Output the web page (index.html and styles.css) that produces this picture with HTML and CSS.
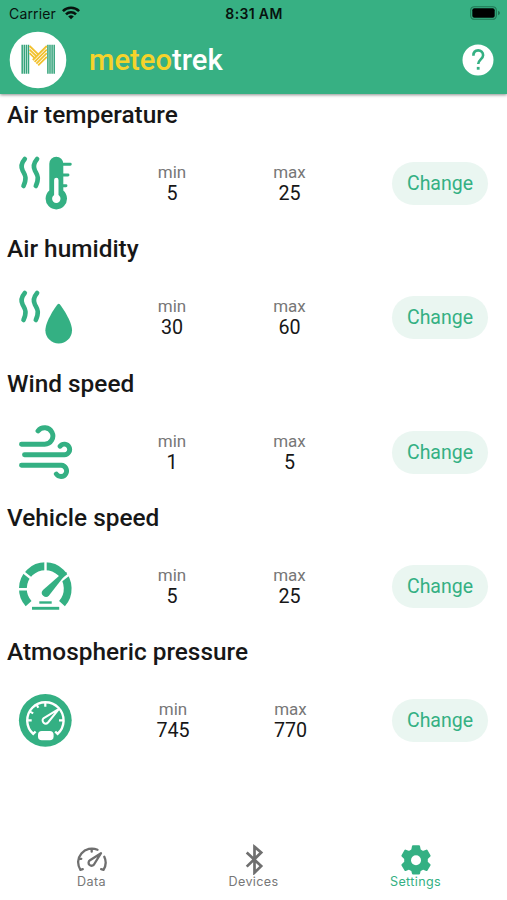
FILE: index.html
```html
<!DOCTYPE html>
<html lang="en">
<head>
<meta charset="utf-8">
<title>meteotrek</title>
<link rel="stylesheet" href="styles.css">
</head>
<body>
<header class="header">
  <div class="status">
    <div class="carrier"><span>Carrier</span>
      <svg width="18" height="14" viewBox="0 0 18 14" fill="none" stroke="#07130e" stroke-width="2.6"><path d="M.9 5.2a11.4 11.4 0 0 1 16.2 0M4 8.4a7 7 0 0 1 10 0"/><path d="M9 13.3 6.2 10.5a4 4 0 0 1 5.6 0z" fill="#07130e" stroke="none"/></svg>
    </div>
    <span class="clock">8:31 AM</span>
    <svg class="battery" width="31" height="14" viewBox="0 0 31 14"><rect x=".7" y=".7" width="25.6" height="12.6" rx="3.6" fill="none" stroke="#1f7553" stroke-width="1.1"/><rect x="2.3" y="2.3" width="22.4" height="9.4" rx="2" fill="#000"/><path d="M28 4.7q2 .8 2 2.3t-2 2.3z" fill="#1f7553"/></svg>
  </div>
  <div class="bar">
    <svg width="58" height="58" viewBox="0 0 58 58">
      <circle cx="29" cy="29" r="28.3" fill="#fff"/>
      <path d="M13.2 13.7v29M15.3 13.7v29M17.4 13.7v29M19.5 13.7v29M38.9 13.7v29M41 13.7v29M43.1 13.7v29M45.2 13.7v29" stroke="#35a47b" stroke-width="1.5"/>
      <path d="M20.6 15 30 24.2M20.6 18.6l7.6 7.4M20.6 22.2l5.8 5.6M37.8 15 23.8 29M37.8 18.6 25.6 30.8M37.8 22.2 27.4 32.6M37.8 25.8 29.2 34.4" fill="none" stroke="#f2c12e" stroke-width="1.8"/>
    </svg>
    <h1><span>meteo</span>trek</h1>
    <svg class="help" width="32" height="32" viewBox="0 0 32 32"><circle cx="16" cy="16" r="15.5" fill="#fff"/><path d="M11.4 11.7C11.4 8.4 13.4 6.4 16.2 6.4s4.9 1.9 4.9 4.8c0 3.9-4.9 4.6-4.9 8.9" fill="none" stroke="#34b083" stroke-width="2.6"/><rect x="14.8" y="22.9" width="2.8" height="2.8" fill="#34b083"/></svg>
  </div>
</header>
<main>
  <section>
    <h2>Air temperature</h2>
    <div class="row">
      <svg class="icon" viewBox="0 0 56 56"><g fill="none" stroke="#34b083" stroke-linecap="round"><path stroke-width="4.6" d="M7.8 4C4.4 8 3.6 11.5 5.6 15.5S10.5 22 6.5 31M20.1 4c-3.4 4-4.2 7.5-2.2 11.5S22.8 22 18.8 31"/><path stroke-width="2.9" d="M44 9.3h9.3M44 20h7M44 30.7h5"/></g><path d="M32.3 8.7a7 7 0 0 1 14 0v26.9a10.7 10.7 0 1 1-14 0z" fill="#34b083"/><path d="M39.3 25v18" stroke="#fff" stroke-width="4.4" stroke-linecap="round"/><circle cx="39.3" cy="43.7" r="4.2" fill="#fff"/></svg>
      <div class="value low"><span>min</span><b>5</b></div>
      <div class="value high"><span>max</span><b>25</b></div>
      <button>Change</button>
    </div>
  </section>
  <section>
    <h2>Air humidity</h2>
    <div class="row">
      <svg class="icon" viewBox="0 0 56 56"><path fill="none" stroke="#34b083" stroke-linecap="round" stroke-width="4.6" d="M7.8 4C4.4 8 3.6 11.5 5.6 15.5S10.5 22 6.5 31M20.1 4c-3.4 4-4.2 7.5-2.2 11.5S22.8 22 18.8 31"/><path fill="#34b083" d="M40.6 15.3q1.1-1.2 2.2 0C45 18 55 32.5 55 41.2a13.3 13.3 0 0 1-26.6 0C28.4 32.5 38.4 18 40.6 15.3z"/></svg>
      <div class="value low"><span>min</span><b>30</b></div>
      <div class="value high"><span>max</span><b>60</b></div>
      <button>Change</button>
    </div>
  </section>
  <section>
    <h2>Wind speed</h2>
    <div class="row">
      <svg class="icon" viewBox="0 0 56 56"><path fill="none" stroke="#34b083" stroke-linecap="round" stroke-linejoin="round" stroke-width="4.9" d="M4.5 20.3h23.2A8.3 8.3 0 1 0 21 6.9M7.5 30.7h39.8a5.3 5.3 0 1 0-4.2-8.5M4.5 41.3h39.8a5.6 5.6 0 1 1-5 8.7"/></svg>
      <div class="value low"><span>min</span><b>1</b></div>
      <div class="value high"><span>max</span><b>5</b></div>
      <button>Change</button>
    </div>
  </section>
  <section>
    <h2>Vehicle speed</h2>
    <div class="row">
      <svg class="icon" viewBox="0 0 56 56"><path d="M11.6 45.6A22.4 22.4 0 1 1 45 45.6" fill="none" stroke="#34b083" stroke-width="7.8"/><path d="M0 31.3h13M4.5 12.7l10 8M28.5 2v13M54.5 14.5 43 23.5" stroke="#fff" stroke-width="2.4"/><path d="M50 14.5 32 37.5a4.1 4.1 0 0 1-6-5.6L46.5 14z" fill="#34b083"/><path d="M22.3 44.5h12.4" stroke="#34b083" stroke-width="2.4"/><path d="M15 50.3h27.2" stroke="#34b083" stroke-width="2.9"/></svg>
      <div class="value low"><span>min</span><b>5</b></div>
      <div class="value high"><span>max</span><b>25</b></div>
      <button>Change</button>
    </div>
  </section>
  <section>
    <h2>Atmospheric pressure</h2>
    <div class="row wide">
      <svg class="icon" viewBox="0 0 56 56"><circle cx="28.3" cy="28.3" r="26.4" fill="#34b083"/><g fill="none" stroke="#fff"><path stroke-width="2.4" d="m18.6 39.5-2.4 2.4A18.2 18.2 0 1 1 40.6 41.9l-2.4-2.4"/><path stroke-width="2.2" d="M10.5 28.3h4.2M42 28.3h4.2M28.3 10.5v4.3M13 19.6l3.2 1.8M19.5 12.5l1.8 3.2"/><path stroke-width="2" stroke-linejoin="round" d="M42 16.8 31 30.5a3.1 3.1 0 0 1-4.6-4.2z"/></g><rect x="21" y="39" width="15.6" height="9.3" rx="3.8" fill="#fff"/></svg>
      <div class="value low"><span>min</span><b>745</b></div>
      <div class="value high"><span>max</span><b>770</b></div>
      <button>Change</button>
    </div>
  </section>
</main>
<nav class="tabs">
  <a class="tab data">
    <svg width="32" height="32" viewBox="0 0 32 32" fill="none" stroke="#6f6f6f" stroke-width="2.3" stroke-linecap="round" stroke-linejoin="round"><path d="m6.8 26.2-2.4.6A13.7 13.7 0 0 1 21.5 6.8M28.3 13.7A13.7 13.7 0 0 1 27.5 26.8l-2.4-.6M2.7 15.8h2.6M15.7 6.2v2.5"/><path d="M25 10.2 14 17.2a3 3 0 1 0 4.3 3.8z"/></svg>
    <span>Data</span>
  </a>
  <a class="tab devices">
    <svg width="32" height="32" viewBox="0 0 32 32" fill="none" stroke="#6f6f6f" stroke-width="2.7"><path d="m8.7 9.5 14.5 13.6-6.7 6.5V3.8l6.7 5.7L8.7 23.6"/></svg>
    <span>Devices</span>
  </a>
  <a class="tab settings">
    <svg width="32" height="32" viewBox="0 0 32 32"><path fill="#34b083" stroke="#34b083" stroke-width="2" stroke-linejoin="round" d="M13 3.2h6l.8 4 3.2 1.8 3.6-1.4 3 5.1-2.8 2.8v3.6l2.8 2.8-3 5.1-3.6-1.4-3.2 1.8-.8 3.2h-6l-.8-3.2L9 25.6 5.4 27l-3-5.1 2.8-2.8v-3.6l-2.8-2.8 3-5.1L9 9l3.2-1.8z"/><circle cx="16" cy="17.2" r="5" fill="#fff"/></svg>
    <span>Settings</span>
  </a>
</nav>
</body>
</html>
```
FILE: styles.css
```css
* { box-sizing: border-box; }
body { margin: 0; width: 507px; height: 900px; overflow: hidden; display: flex; flex-direction: column; background: #fff; font-family: Roboto, sans-serif; color: #171717; }
svg { display: block; flex: none; }
.header { height: 94px; flex: none; background: #37b083; box-shadow: 0 1px 3px rgba(0,0,0,.45); }
.status { height: 28px; display: grid; grid-template-columns: 1fr auto 1fr; align-items: center; padding: 0 6px 0 9px; font: 14px/28px Inter, sans-serif; color: #07130e; }
.carrier { display: flex; align-items: center; gap: 6px; letter-spacing: .15px; }
.carrier svg { margin-top: -2px; }
.clock { font-weight: 600; font-size: 14px; letter-spacing: .35px; margin-left: -2px; }
.battery { justify-self: end; margin-top: -2px; }
.bar { height: 63px; display: flex; align-items: center; padding: 0 13px 0 9px; }
h1 { margin: 0 auto 0 22px; font-size: 29.2px; font-weight: 500; line-height: 36px; color: #fff; }
h1 span { color: #f6d32b; }
main { flex: 1; }
section { height: 134.33px; }
h2 { margin: 0; padding: 6px 0 0 7px; font-size: 24.4px; font-weight: 500; line-height: 30px; }
.row { height: 98px; display: grid; grid-template-columns: 56px 116px 119px 1fr; padding: 0 19px 0 17px; align-items: start; }
.icon { width: 56px; height: 56px; margin-top: 25px; }
.value { margin-top: 32px; display: flex; flex-direction: column; align-items: center; }
.low, .high { padding-left: 82px; }
.wide .value { padding-left: 84px; }
.value span { font-size: 17px; line-height: 21px; color: #777; }
.value b { font-size: 19.7px; line-height: 22px; font-weight: 400; }
button { justify-self: end; width: 96px; height: 43px; margin-top: 32px; padding: 0; border: 0; border-radius: 22px; background: #eaf6f1; color: #34b083; font: 19.5px Roboto, sans-serif; }
.tabs { height: 64px; flex: none; display: grid; grid-template-columns: 183px 141px 183px; }
.tab { display: flex; flex-direction: column; align-items: center; padding-top: 7px; font: 12.6px/16px Inter, sans-serif; letter-spacing: .35px; color: #777; }
.tab svg { margin-bottom: -1px; }
.settings { color: #34b083; }
```
